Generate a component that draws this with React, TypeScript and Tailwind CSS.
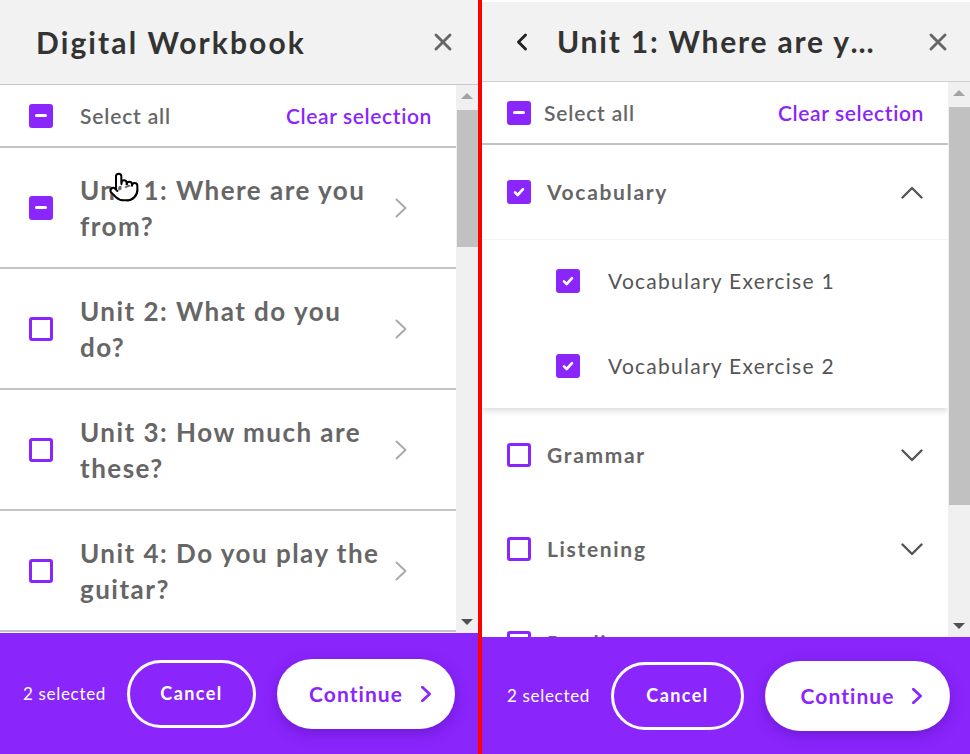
import { ChevronLeft, Pointer, X } from "lucide-react"

const purple = "bg-[#8a25fc]"

type BoxState = "checked" | "partial" | "empty"

function CheckBox({ state }: { state: BoxState }) {
  if (state === "empty") {
    return <span className="block h-6 w-6 shrink-0 rounded-[3px] border-[3px] border-[#8a25fc] bg-white" />
  }
  return (
    <span className={`flex h-6 w-6 shrink-0 items-center justify-center rounded-[3px] ${purple}`}>
      {state === "partial" ? (
        <span className="block h-[3px] w-3 rounded-sm bg-white" />
      ) : (
        <svg viewBox="0 0 12 12" className="h-3 w-3" fill="none" stroke="white" strokeWidth="2.6" strokeLinecap="round" strokeLinejoin="round">
          <path d="M2 6.4 4.7 9 10 3.2" />
        </svg>
      )}
    </span>
  )
}

function ArrowRight({ className }: { className?: string }) {
  return (
    <svg viewBox="0 0 12 20" className={className} fill="none" stroke="currentColor" strokeWidth="2" strokeLinecap="round" strokeLinejoin="round">
      <path d="M1.5 1.5 10.5 10 1.5 18.5" />
    </svg>
  )
}

function Caret({ up }: { up?: boolean }) {
  return (
    <svg viewBox="0 0 22 13" className="ml-auto h-[13px] w-[22px] text-[#555]" fill="none" stroke="currentColor" strokeWidth="2.4" strokeLinecap="round" strokeLinejoin="round">
      <path d={up ? "M1.5 11.5 11 2 20.5 11.5" : "M1.5 1.5 11 11 20.5 1.5"} />
    </svg>
  )
}

function ScrollBar({ thumbTop, thumbHeight }: { thumbTop: number; thumbHeight: number }) {
  return (
    <div className="relative flex w-[22px] shrink-0 flex-col bg-[#f0f0f0]">
      <div className="flex h-[22px] items-center justify-center">
        <span className="block h-0 w-0 border-x-[6px] border-b-[6px] border-x-transparent border-b-[#a3a3a3]" />
      </div>
      <div className="relative flex-1">
        <div className="absolute left-[1px] right-0 bg-[#c1c1c1]" style={{ top: thumbTop, height: thumbHeight }} />
      </div>
      <div className="flex h-[22px] items-center justify-center">
        <span className="block h-0 w-0 border-x-[6px] border-t-[6px] border-x-transparent border-t-[#505050]" />
      </div>
    </div>
  )
}

function Footer({ pad, cancelW }: { pad: string; cancelW: string }) {
  return (
    <div className={`relative z-20 flex shrink-0 items-center ${purple} ${pad}`}>
      <span className="text-[17px] tracking-[0.04em] text-white">2 selected</span>
      <button className={`ml-[21px] flex h-[68px] items-center justify-center rounded-full border-[3px] border-white text-[18px] font-bold tracking-[0.08em] text-white ${cancelW}`}>
        Cancel
      </button>
      <button className="ml-[21px] flex h-[70px] flex-1 items-center justify-center gap-[18px] rounded-full bg-white pl-2 text-[21px] font-bold tracking-[0.05em] text-[#8a25fc] shadow-[0_4px_14px_rgba(60,0,140,0.35)]">
        Continue
        <ArrowRight className="h-[16px] w-[10px] [stroke-width:3.4]" />
      </button>
    </div>
  )
}

const units = [
  { title: "Unit 1: Where are you from?", state: "partial" as BoxState },
  { title: "Unit 2: What do you do?", state: "empty" as BoxState },
  { title: "Unit 3: How much are these?", state: "empty" as BoxState },
  { title: "Unit 4: Do you play the guitar?", state: "empty" as BoxState },
]

function WorkbookPanel() {
  return (
    <div className="flex h-full w-[478px] shrink-0 flex-col">
      <div className="flex h-[85px] shrink-0 items-center justify-between border-b border-[#c8c8c8] bg-[#f2f2f2] pl-9 pr-[21px]">
        <h1 className="text-[30px] font-bold tracking-[0.07em] text-[#333]">Digital Workbook</h1>
        <X className="h-7 w-7 text-[#666]" strokeWidth={2.5} />
      </div>
      <div className="flex min-h-0 flex-1">
        <div className="relative min-w-0 flex-1 overflow-hidden">
          <div className="flex h-[63px] items-center border-b-2 border-[#c4c4c4] pl-[29px] pr-6">
            <CheckBox state="partial" />
            <span className="ml-[27px] text-[21px] font-semibold tracking-[0.04em] text-[#666]">Select all</span>
            <span className="ml-auto text-[21px] font-semibold tracking-[0.03em] text-[#8a25fc]">Clear selection</span>
          </div>
          {units.map((u) => (
            <div key={u.title} className="flex h-[121px] items-center border-b-2 border-[#c4c4c4] pl-[29px]">
              <CheckBox state={u.state} />
              <span className="ml-[27px] w-[305px] text-[26px] font-bold leading-[36px] tracking-[0.057em] text-[#666]">{u.title}</span>
              <ArrowRight className="ml-[10px] h-[20px] w-[12px] text-[#aaa]" />
            </div>
          ))}
          <Pointer className="absolute left-[108px] top-[86px] h-8 w-8 fill-white text-black" strokeWidth={1.5} />
        </div>
        <ScrollBar thumbTop={3} thumbHeight={137} />
      </div>
      <Footer pad="h-[121px] pl-[23px] pr-[23px]" cancelW="w-[129px]" />
    </div>
  )
}

function SectionRow({ label, state, open }: { label: string; state: BoxState; open?: boolean }) {
  return (
    <div className="flex h-[94px] items-center pl-[25px] pr-[25px]">
      <CheckBox state={state} />
      <span className="ml-4 text-[21px] font-bold tracking-[0.08em] text-[#666]">{label}</span>
      <Caret up={open} />
    </div>
  )
}

function UnitPanel() {
  return (
    <div className="flex h-full min-w-0 flex-1 flex-col">
      <div className="flex h-[82px] shrink-0 items-center border-b border-t-2 border-b-[#d0d0d0] border-t-white bg-[#f2f2f2] pl-[26px] pr-[18px]">
        <ChevronLeft className="h-7 w-7 text-[#222]" strokeWidth={2.5} />
        <h1 className="ml-[21px] w-[332px] truncate text-[30px] font-bold tracking-[0.06em] text-[#333]">Unit 1: Where are you from?</h1>
        <X className="ml-auto h-7 w-7 text-[#666]" strokeWidth={2.5} />
      </div>
      <div className="flex min-h-0 flex-1">
        <div className="min-w-0 flex-1 overflow-hidden">
          <div className="flex h-[63px] items-center border-b-2 border-[#c4c4c4] pl-[25px] pr-6">
            <CheckBox state="partial" />
            <span className="ml-[13px] text-[21px] font-semibold tracking-[0.04em] text-[#666]">Select all</span>
            <span className="ml-auto text-[21px] font-semibold tracking-[0.03em] text-[#8a25fc]">Clear selection</span>
          </div>
          <div className="relative z-10 shadow-[0_3px_6px_rgba(0,0,0,0.14)]">
            <div className="border-b border-[#f4f4f4]">
              <SectionRow label="Vocabulary" state="checked" open />
            </div>
            <div className="flex flex-col gap-[17px] pb-[8px] pt-[7px] pl-[74px]">
              {["Vocabulary Exercise 1", "Vocabulary Exercise 2"].map((t) => (
                <div key={t} className="flex h-[68px] items-center">
                  <CheckBox state="checked" />
                  <span className="ml-7 text-[21px] tracking-[0.06em] text-[#555]">{t}</span>
                </div>
              ))}
            </div>
          </div>
          <SectionRow label="Grammar" state="empty" />
          <SectionRow label="Listening" state="empty" />
          <SectionRow label="Reading" state="empty" />
        </div>
        <ScrollBar thumbTop={3} thumbHeight={398} />
      </div>
      <Footer pad="h-[117px] pl-[25px] pr-5" cancelW="w-[133px]" />
    </div>
  )
}

export default function App() {
  return (
    <div className="flex h-[754px] w-[970px] overflow-hidden bg-white font-['Lato',sans-serif]">
      <WorkbookPanel />
      <div className="w-1 shrink-0 bg-[#ff0000]" />
      <UnitPanel />
    </div>
  )
}
